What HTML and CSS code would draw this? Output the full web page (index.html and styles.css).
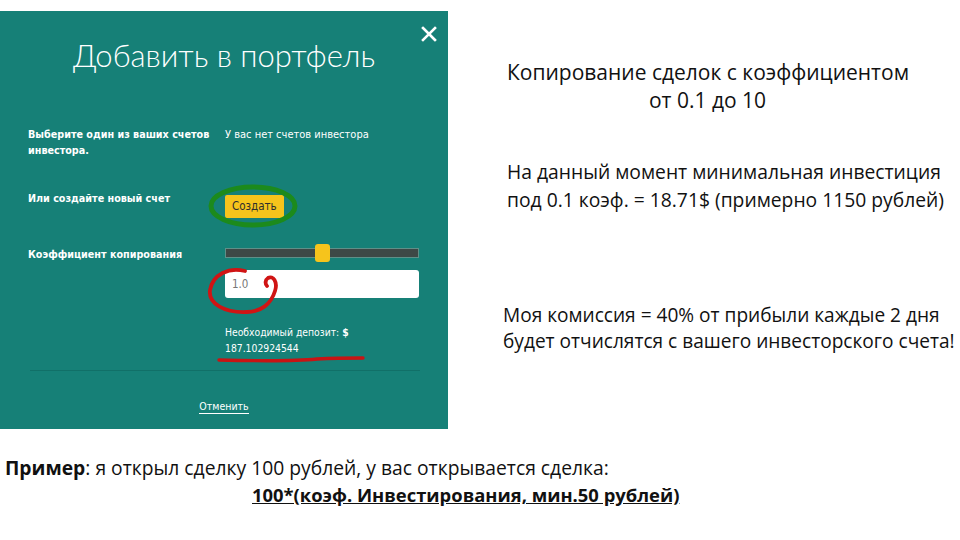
FILE: index.html
```html
<!DOCTYPE html>
<html lang="ru">
<head>
<meta charset="utf-8">
<link rel="stylesheet" href="styles.css">
</head>
<body>
<div class="slide">
  <div class="top">
    <div class="panel">
      <div class="close">
        <svg width="16" height="16" viewBox="0 0 16 16"><path d="M2 2L14 14M14 2L2 14" stroke="#ffffff" stroke-width="2.6" stroke-linecap="square"/></svg>
      </div>
      <h1 class="title">Добавить в портфель</h1>
      <div class="form">
        <div class="row row-accounts">
          <div class="label">Выберите один из ваших счетов<br>инвестора.</div>
          <div class="value note">У вас нет счетов инвестора</div>
        </div>
        <div class="row row-create">
          <div class="label">Или создайте новый счет</div>
          <div class="value">
            <span class="btn">Создать</span>
            <svg class="mark ellipse" width="94" height="46" viewBox="0 0 94 46"><ellipse cx="45" cy="23" rx="42" ry="19" fill="none" stroke="#1c8a1c" stroke-width="5"/></svg>
          </div>
        </div>
        <div class="row row-coef">
          <div class="label">Коэффициент копирования</div>
          <div class="value">
            <div class="slider"><span class="thumb"></span></div>
          </div>
        </div>
        <div class="row row-input">
          <div class="label"></div>
          <div class="value">
            <div class="input">1.0</div>
            <svg class="mark circle" width="80" height="52" viewBox="0 0 80 52"><path d="M40 5C24 1 8 8 5 24C3 38 20 47 42 46C56 46 66 38 70 25C73 16 68 9 63 12C60 14 60 18 62 20" fill="none" stroke="#d01414" stroke-width="3.8" stroke-linecap="round"/></svg>
          </div>
        </div>
        <div class="row row-deposit">
          <div class="label"></div>
          <div class="value deposit">Необходимый депозит: <b>$</b><br>187.102924544
            <svg class="mark underline" width="150" height="8" viewBox="0 0 150 8"><path d="M2 5C40 6 80 6 100 4C120 3 135 3 146 3" fill="none" stroke="#c81414" stroke-width="3.4" stroke-linecap="round"/></svg>
          </div>
        </div>
      </div>
      <div class="divider"></div>
      <div class="cancel"><span>Отменить</span></div>
    </div>
    <div class="notes">
      <p class="n1">Копирование сделок с коэффициентом<br>от 0.1 до 10</p>
      <p class="n2">На данный момент минимальная инвестиция<br>под 0.1 коэф. = 18.71$ (примерно 1150 рублей)</p>
      <p class="n3">Моя комиссия = 40% от прибыли каждые 2 дня<br>будет отчислятся с вашего инвесторского счета!</p>
    </div>
  </div>
  <div class="example">
    <p class="ex1"><b>Пример</b>: я открыл сделку 100 рублей, у вас открывается сделка:</p>
    <p class="ex2">100*(коэф. Инвестирования, мин.50 рублей)</p>
  </div>
</div>
</body>
</html>
```
FILE: styles.css
```css
html, body {
  margin: 0;
  padding: 0;
  background: #ffffff;
}
.slide {
  width: 960px;
  height: 540px;
  overflow: hidden;
  font-family: "Open Sans", "Liberation Sans", sans-serif;
  color: #111111;
}
.top {
  display: flex;
  padding-top: 11px;
}
.panel {
  position: relative;
  flex: none;
  width: 448px;
  height: 418px;
  background: #168077;
  color: #ffffff;
  box-sizing: border-box;
  padding-top: 22px;
}
.close {
  position: absolute;
  top: 15px;
  right: 11px;
  width: 16px;
  height: 16px;
}
.close svg { display: block; }
.title {
  margin: 0;
  font-family: "Lato", "Open Sans", sans-serif;
  font-weight: 300;
  font-size: 31px;
  line-height: 44px;
  text-align: center;
}
.form {
  margin-top: 50px;
  padding: 0 29px 0 28px;
  font-family: "Liberation Sans Narrow", "DejaVu Sans Condensed", sans-serif;
  font-size: 10.7px;
  line-height: 16px;
}
.row {
  display: grid;
  grid-template-columns: 197px 194px;
}
.label {
  font-weight: bold;
}
.value { position: relative; }
.note { font-size: 11px; }
.row-create { margin-top: 32px; }
.row-create .btn {
  display: inline-block;
  margin-top: 4px;
  background: #f6c41c;
  color: #2e2e2e;
  padding: 4px 7px;
  border-radius: 2px;
  font-size: 11.5px;
  line-height: 15px;
}
.mark { position: absolute; pointer-events: none; }
.ellipse { left: -17px; top: -8px; }
.row-coef { margin-top: 29px; }
.slider {
  position: relative;
  margin-top: 1px;
  height: 10px;
  background: #3d4846;
  border: 1px solid #5f8f88;
  box-sizing: border-box;
}
.thumb {
  position: absolute;
  left: 89px;
  top: -5px;
  width: 15px;
  height: 18px;
  border-radius: 3px;
  background: #f6c41c;
}
.row-input { margin-top: 7px; }
.input {
  height: 28px;
  background: #ffffff;
  border-radius: 3px;
  color: #777777;
  padding-left: 7px;
  line-height: 28px;
  font-size: 11.5px;
}
.circle { left: -20px; top: -4px; }
.row-deposit { margin-top: 26px; }
.deposit { font-size: 10.3px; line-height: 16px; }
.underline { left: -8px; top: 31px; }
.divider {
  margin: 14px 28px 0 30px;
  height: 1px;
  background: #117068;
}
.cancel {
  margin-top: 27px;
  text-align: center;
  font-family: "Liberation Sans Narrow", "DejaVu Sans Condensed", sans-serif;
  font-size: 10.5px;
  line-height: 16px;
}
.cancel span { border-bottom: 1px solid #ffffff; padding-bottom: 1px; }
.notes {
  padding-left: 59px;
  font-size: 19.3px;
  line-height: 28px;
  color: #111111;
}
.notes p { margin: 0; }
.n1 { margin-top: 47px !important; width: 401px; text-align: center; font-size: 21px; white-space: nowrap; }
.n2 { margin-top: 44px !important; white-space: nowrap; }
.n3 { margin-top: 88px !important; margin-left: -4px !important; line-height: 26px; font-size: 19.1px; white-space: nowrap; }
.example {
  margin-top: 25px;
  padding-left: 5px;
  font-size: 19.3px;
  line-height: 27px;
}
.example p { margin: 0; }
.ex2 {
  padding-left: 247px;
  font-size: 18.4px;
  font-weight: bold;
  text-decoration: underline;
}
```
